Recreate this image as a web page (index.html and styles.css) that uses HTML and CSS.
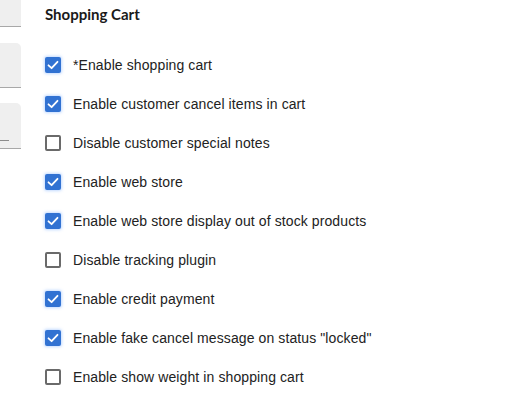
FILE: index.html
```html
<!DOCTYPE html>
<html>
<head>
<meta charset="utf-8">
<link rel="stylesheet" href="styles.css">
</head>
<body>
<div class="page">
  <div class="tabs">
    <div class="tab tab-1"></div>
    <div class="tab tab-2"></div>
    <div class="tab tab-3"><span class="dash"></span></div>
  </div>
  <div class="main">
    <h2 class="title">Shopping Cart</h2>
    <ul class="list">
      <li class="row"><span class="cb on"><svg viewBox="0 0 16 16"><path d="M3.5 8.3 L6.6 11.2 L12.5 4.8"/></svg></span><span class="label">*Enable shopping cart</span></li>
      <li class="row"><span class="cb on"><svg viewBox="0 0 16 16"><path d="M3.5 8.3 L6.6 11.2 L12.5 4.8"/></svg></span><span class="label">Enable customer cancel items in cart</span></li>
      <li class="row"><span class="cb"></span><span class="label">Disable customer special notes</span></li>
      <li class="row"><span class="cb on"><svg viewBox="0 0 16 16"><path d="M3.5 8.3 L6.6 11.2 L12.5 4.8"/></svg></span><span class="label">Enable web store</span></li>
      <li class="row"><span class="cb on"><svg viewBox="0 0 16 16"><path d="M3.5 8.3 L6.6 11.2 L12.5 4.8"/></svg></span><span class="label">Enable web store display out of stock products</span></li>
      <li class="row"><span class="cb"></span><span class="label">Disable tracking plugin</span></li>
      <li class="row"><span class="cb on"><svg viewBox="0 0 16 16"><path d="M3.5 8.3 L6.6 11.2 L12.5 4.8"/></svg></span><span class="label">Enable credit payment</span></li>
      <li class="row"><span class="cb on"><svg viewBox="0 0 16 16"><path d="M3.5 8.3 L6.6 11.2 L12.5 4.8"/></svg></span><span class="label">Enable fake cancel message on status "locked"</span></li>
      <li class="row"><span class="cb"></span><span class="label">Enable show weight in shopping cart</span></li>
    </ul>
  </div>
</div>
</body>
</html>
```
FILE: styles.css
```css
html, body {
  margin: 0;
  padding: 0;
  background: #ffffff;
}
.page {
  display: flex;
  width: 506px;
  height: 410px;
  overflow: hidden;
}
.tabs {
  width: 21px;
  flex: none;
  display: flex;
  flex-direction: column;
}
.tab {
  background: #efefef;
  border-bottom: 1px solid #a8a8a8;
  border-radius: 0 5px 0 0;
  position: relative;
}
.tab-1 { height: 26px; border-radius: 0; }
.tab-2 { height: 44px; margin-top: 16px; }
.tab-3 { height: 45px; margin-top: 15px; }
.dash {
  position: absolute;
  left: 0;
  bottom: 7px;
  width: 9px;
  height: 1px;
  background: #8c8c8c;
}
.main {
  padding-left: 24px;
  flex: 1;
}
.title {
  margin: 4px 0 0;
  font-family: Lato, "Open Sans", sans-serif;
  font-weight: 700;
  font-size: 15px;
  line-height: 20px;
  color: #1a1a1a;
}
.list {
  list-style: none;
  margin: 21px 0 0;
  padding: 0;
}
.row {
  display: flex;
  align-items: center;
  height: 39px;
  gap: 12px;
}
.cb {
  width: 16px;
  height: 16px;
  box-sizing: border-box;
  border: 2px solid #6a6a6a;
  border-radius: 2px;
  flex: none;
  display: flex;
}
.cb.on {
  border: none;
  background: #3172d2;
  box-shadow: 0 0 3px 1px rgba(80, 150, 255, 0.35);
}
.cb svg {
  width: 16px;
  height: 16px;
}
.cb path {
  fill: none;
  stroke: #ffffff;
  stroke-width: 1.8;
  stroke-linecap: round;
  stroke-linejoin: round;
}
.label {
  font-family: "Liberation Sans", Arial, sans-serif;
  font-size: 14px;
  color: #222222;
  letter-spacing: 0.1px;
}
```
